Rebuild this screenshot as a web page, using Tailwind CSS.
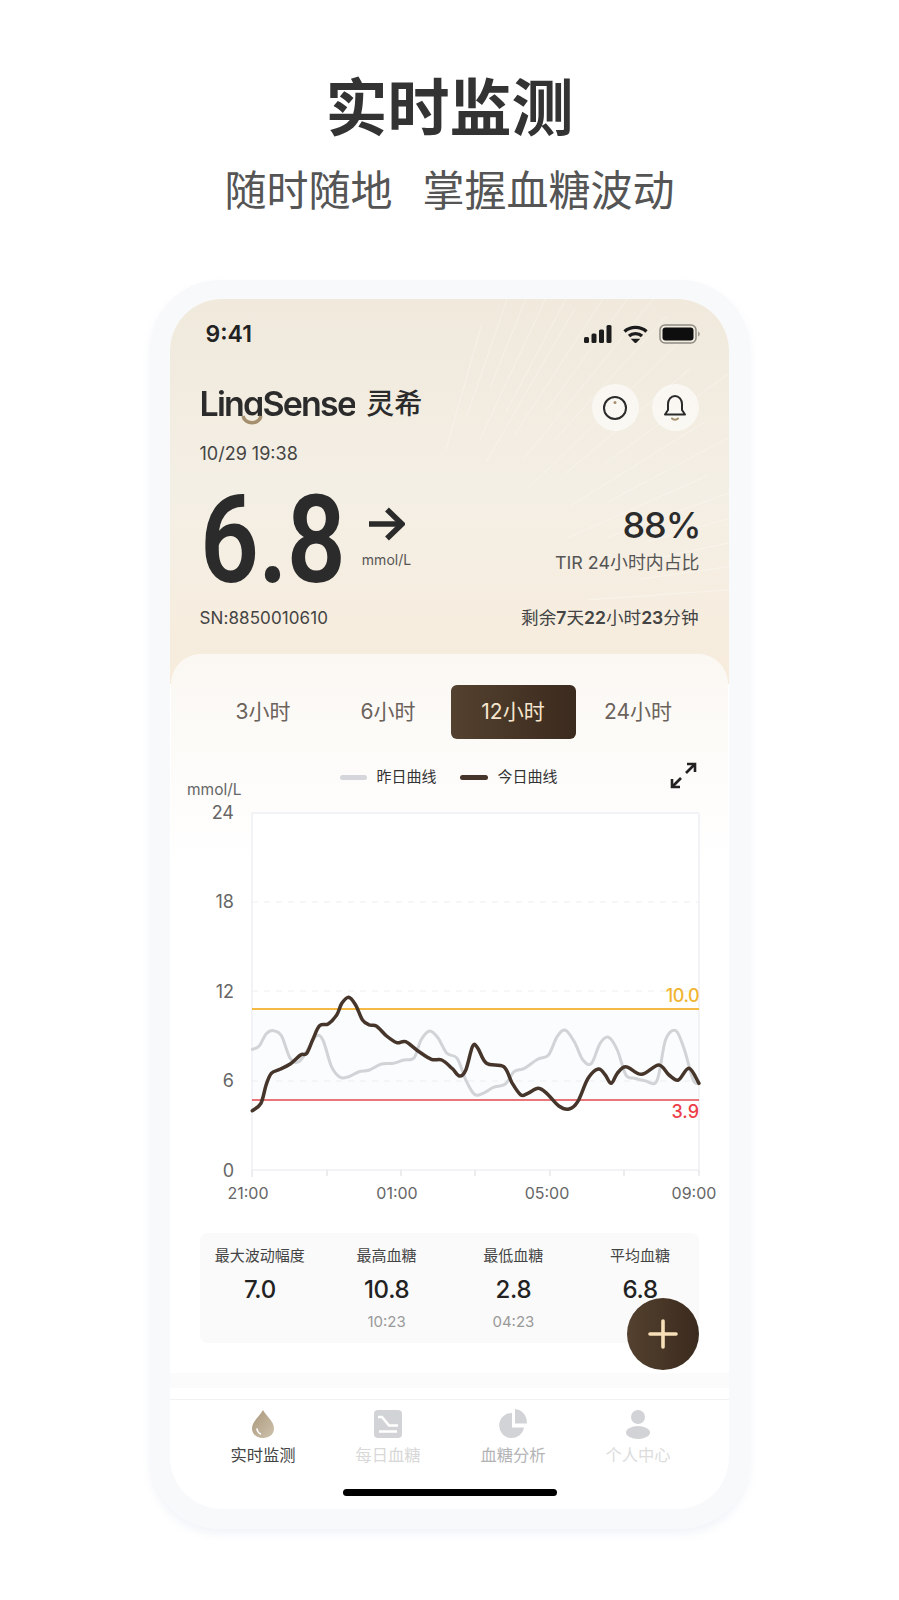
<!DOCTYPE html>
<html lang="zh-CN">
<head>
  <meta charset="UTF-8" />
  <meta name="viewport" content="width=device-width, initial-scale=1.0"/>
  <title>实时监测 | LingSense</title>
  <script src="https://cdn.jsdelivr.net/npm/@tailwindcss/browser@4"></script>
</head>
<body class="bg-white text-[#333] font-['Inter','Noto_Sans_CJK_SC',sans-serif]">
<div class="w-[899px] h-[1600px] overflow-hidden">

  <!-- Heading -->
  <h1 class="mt-[79px] h-[60px] leading-[60px] text-center text-[62px] font-bold text-[#333]">实时监测</h1>
  <p class="mt-[27px] h-[50px] leading-[50px] text-center text-[42px] text-[#555] flex justify-center gap-[30px]"><span>随时随地</span><span>掌握血糖波动</span></p>

  <!-- Phone -->
  <div class="mt-[64px] mx-auto w-[600px] h-[1249px] rounded-[70px] bg-[#f8f9fb] px-[20px] pt-[19px] shadow-[0_5px_8px_rgba(225,230,240,0.45)]">
    <div class="relative w-[559px] h-[1210px] rounded-[52px] bg-white overflow-hidden">

      <!-- Header -->
      <div class="relative h-[385px] bg-gradient-to-b from-[#f0e9dc] via-[#f4efe5] to-[#f7ecdc]">
        <svg id="rays" class="absolute inset-0" width="559" height="385"></svg>

        <!-- Status bar -->
        <div class="relative flex items-center justify-between h-[30px] top-[20px] pl-[36px] pr-[29px]">
          <span class="text-[23px] font-semibold text-[#222]">9:41</span>
          <div class="flex items-center gap-[11px]">
            <svg width="28" height="18" viewBox="0 0 28 18" fill="#1c1c1c"><rect x="0" y="12" width="5" height="6" rx="1.500"/><rect x="7.500" y="8.500" width="5" height="9.500" rx="1.500"/><rect x="15" y="4.500" width="5" height="13.500" rx="1.500"/><rect x="22.500" y="0" width="5" height="18" rx="1.500"/></svg>
            <svg width="25" height="18" viewBox="0 0 25 18" fill="none" stroke="#1c1c1c" stroke-width="3.400"><path d="M1.500 6.500C7.500 1 17.500 1 23.500 6.500"/><path d="M6 11C9.500 7.800 15.500 7.800 19 11"/><path d="M9.500 14.500L12.500 17.500L15.500 14.500Z" fill="#1c1c1c" stroke-width="1.500"/></svg>
            <svg width="41" height="20" viewBox="0 0 41 20" fill="none"><rect x="1" y="1" width="36" height="18" rx="5" stroke="#8f8c84" stroke-width="1.500"/><rect x="3.500" y="3.500" width="31" height="13" rx="3" fill="#0e0e0e"/><path d="M39 7.500c1.200.4 1.800 1.300 1.800 2.500s-.6 2.100-1.800 2.500Z" fill="#a09d94"/></svg>
          </div>
        </div>

        <!-- Logo and round buttons -->
        <div class="relative flex items-center justify-between mt-[35px] top-[20px] pl-[30px] pr-[30px] h-[47px]">
          <div class="relative flex items-center h-[40px] -top-[4px]">
            <span class="block text-[34px] leading-[40px] font-semibold tracking-[-1.800px] text-transparent bg-clip-text bg-gradient-to-b from-[#2b2b2b] from-[81%] to-transparent to-[81%]">LingSense</span>
            <span class="ml-[11px] text-[28px] font-medium text-[#2b2b2b] leading-[28px]">灵希</span>
            <svg class="absolute left-[41px] top-[30px]" width="22" height="12" viewBox="0 0 22 12" fill="none"><path d="M2 2C4 11 18 11 20 2" stroke="#a58f6f" stroke-width="3.500"/></svg>
          </div>
          <div class="flex gap-[13px]">
            <div class="w-[47px] h-[47px] rounded-full bg-white/60 flex items-center justify-center">
              <svg width="26" height="26" viewBox="0 0 26 26" fill="none"><circle cx="13" cy="13" r="11" stroke="#2b2b2b" stroke-width="2"/><circle cx="13" cy="7.500" r="1.500" fill="#a58f6f"/></svg>
            </div>
            <div class="w-[47px] h-[47px] rounded-full bg-white/60 flex items-center justify-center">
              <svg width="26" height="30" viewBox="0 0 26 30" fill="none"><path d="M3 21.500h20l-3-4.500V11C20 6.500 17 3 13 3S6 6.500 6 11v6Z" stroke="#2b2b2b" stroke-width="2" stroke-linejoin="round"/><path d="M10 25.500c1.500 1.500 4.500 1.500 6 0" stroke="#a58f6f" stroke-width="2" stroke-linecap="round"/></svg>
            </div>
          </div>
        </div>

        <!-- Time -->
        <div class="relative top-[20px] mt-[11px] pl-[30px] h-[24px] leading-[24px] text-[18px] text-[#444]">10/29 19:38</div>

        <!-- Reading -->
        <div class="relative top-[20px] mt-[6px] pl-[30px] pr-[30px] h-[130px] flex justify-between">
          <div class="flex">
            <span class="block relative top-[18px] w-[155px] h-[100px] origin-left scale-x-[0.84] text-[123px] leading-[100px] font-semibold font-['Roboto'] text-[#2b2b2b] tracking-[-1px]">6.8</span>
            <div class="ml-[7px] pt-[35px] flex flex-col items-center w-[50px]">
              <svg width="37" height="34" viewBox="0 0 37 34" fill="none" stroke="#2b2b2b" stroke-width="5.500"><path d="M1 17H33"/><path d="M19 2.500L34 17L19 31.500"/></svg>
              <span class="mt-[10px] text-[14px] text-[#555] leading-[18px]">mmol/L</span>
            </div>
          </div>
          <div class="flex flex-col items-end pt-[30px] -mr-[2px]">
            <span class="text-[36px] leading-[46px] font-medium tracking-[-1px] text-[#2b2b2b]">88%</span>
            <span class="mt-[3px] mr-[1px] text-[17.900px] leading-[24px] text-[#555]">TIR 24小时内占比</span>
          </div>
        </div>

        <!-- Sensor -->
        <div class="relative top-[20px] mt-[4px] pl-[30px] pr-[30px] h-[24px] leading-[24px] flex justify-between text-[17.600px] text-[#444]">
          <span class="text-[17px] tracking-[0.1px]">SN:8850010610</span>
          <span>剩余<b class="font-semibold">7</b>天<b class="font-semibold">22</b>小时<b class="font-semibold">23</b>分钟</span>
        </div>
      </div>

      <!-- Card -->
      <div class="relative -mt-[30px] h-[719px] rounded-t-[30px] bg-gradient-to-b from-[#fbf8f3] to-white to-[30%] mx-[1px]">
        <!-- Range tabs -->
        <div class="absolute left-[30px] top-[31px] flex w-[500px] h-[54px] items-center text-[21px] text-[#6b625b]">
          <div class="w-[125px] text-center">3小时</div>
          <div class="w-[125px] text-center">6小时</div>
          <div class="w-[125px] h-[54px] leading-[54px] text-center rounded-[6px] bg-gradient-to-r from-[#54412f] to-[#3b2b1e] text-[#f6e6cf]">12小时</div>
          <div class="w-[125px] text-center">24小时</div>
        </div>

        <!-- Legend -->
        <div class="absolute left-[169px] top-[112px] h-[22px] flex items-center text-[15px] text-[#333]">
          <span class="w-[27px] h-[5px] rounded-full bg-[#d5d6dc]"></span>
          <span class="ml-[10px]">昨日曲线</span>
          <span class="ml-[23px] w-[28px] h-[5px] rounded-full bg-[#45352a]"></span>
          <span class="ml-[10px]">今日曲线</span>
        </div>
        <svg class="absolute left-[499px] top-[108px]" width="27" height="27" viewBox="0 0 27 27" fill="none" stroke="#222" stroke-width="2.600"><path d="M16 11L25 2"/><path d="M17 2H25V10"/><path d="M11 16L2 25"/><path d="M2 17V25H10"/></svg>

        <!-- Chart -->
        <svg id="chart" class="absolute left-0 top-0" width="557" height="560" viewBox="171 654 557 560">
          <text x="187" y="795" font-size="15.500" fill="#666">mmol/L</text>
          <rect x="252" y="813" width="447" height="357" fill="#fff"/>
          <rect x="252" y="1009" width="447" height="91" fill="#fbfcfe"/>
          <path d="M252 813H699M699 813V1170M252 813V1170M252 1170H699" stroke="#eef0f3" stroke-width="1.500" fill="none"/>
          <path d="M252 902H699M252 991H699M252 1081H699" stroke="#eceef1" stroke-width="1" stroke-dasharray="6 6" fill="none"/>
          <path d="M252 1170v7M327 1170v6M401 1170v6M475 1170v6M550 1170v6M624 1170v6M699 1170v6" stroke="#e6e7ea" stroke-width="1.500"/>
          <g font-size="18" fill="#666" text-anchor="end">
            <text x="234" y="819">24</text>
            <text x="234" y="908">18</text>
            <text x="234" y="998">12</text>
            <text x="234" y="1087">6</text>
            <text x="234" y="1177">0</text>
          </g>
          <g font-size="16" fill="#666" text-anchor="middle">
            <text x="248" y="1199">21:00</text>
            <text x="397" y="1199">01:00</text>
            <text x="547" y="1199">05:00</text>
            <text x="694" y="1199">09:00</text>
          </g>
          <path id="yesterday" fill="none" stroke="#d2d3d6" stroke-width="3" stroke-linecap="round"/>
          <line x1="252" y1="1009" x2="699" y2="1009" stroke="#f5b945" stroke-width="1.800"/>
          <line x1="252" y1="1100" x2="699" y2="1100" stroke="#e5484d" stroke-width="1.500"/>
          <path id="today" fill="none" stroke="#45352a" stroke-width="3.500" stroke-linecap="round" stroke-linejoin="round"/>
          <text x="699" y="1002" font-size="18" font-weight="500" letter-spacing="-0.500" fill="#f1b431" text-anchor="end">10.0</text>
          <text x="699" y="1118" font-size="18" font-weight="500" fill="#ec3f49" text-anchor="end">3.9</text>
        </svg>

        <!-- Stats -->
        <div class="absolute left-[29px] top-[579px] w-[499px] h-[110px] rounded-[8px] bg-[#fafafa] grid grid-cols-4 pt-[11px] text-center">
          <div class="flex flex-col items-center -ml-[4px]">
            <span class="text-[15px] leading-[24px] text-[#444]">最大波动幅度</span>
            <span class="mt-[6px] text-[24px] leading-[32px] font-medium tracking-[-0.300px] text-[#222]">7.0</span>
          </div>
          <div class="flex flex-col items-center">
            <span class="text-[15px] leading-[24px] text-[#444]">最高血糖</span>
            <span class="mt-[6px] text-[24px] leading-[32px] font-medium tracking-[-0.300px] text-[#222]">10.8</span>
            <span class="mt-[6px] text-[15px] leading-[20px] text-[#999]">10:23</span>
          </div>
          <div class="flex flex-col items-center ml-[4px]">
            <span class="text-[15px] leading-[24px] text-[#444]">最低血糖</span>
            <span class="mt-[6px] text-[24px] leading-[32px] font-medium tracking-[-0.300px] text-[#222]">2.8</span>
            <span class="mt-[6px] text-[15px] leading-[20px] text-[#999]">04:23</span>
          </div>
          <div class="flex flex-col items-center ml-[8px]">
            <span class="text-[15px] leading-[24px] text-[#444]">平均血糖</span>
            <span class="mt-[6px] text-[24px] leading-[32px] font-medium tracking-[-0.300px] text-[#222]">6.8</span>
          </div>
        </div>

        <!-- Add button -->
        <div class="absolute left-[456px] top-[644px] w-[72px] h-[72px] rounded-full bg-gradient-to-r from-[#54412f] to-[#3b2b1e] flex items-center justify-center">
          <svg width="32" height="32" viewBox="0 0 32 32" fill="none" stroke="#f7e0b8" stroke-width="3.600" stroke-linecap="round"><path d="M16 3V29"/><path d="M3 16H29"/></svg>
        </div>
      </div>

      <!-- Divider band -->
      <div class="h-[15px] bg-[#fbfbfb]"></div>

      <!-- Tab bar -->
      <div class="mt-[11px] border-t border-[#f2f2f3] h-[108px] relative">
        <div class="grid grid-cols-4 w-[500px] ml-[31px] text-[16.300px] text-center">
          <div class="flex flex-col items-center pt-[9px] text-[#444]">
            <svg width="24" height="30" viewBox="0 0 24 30"><defs><linearGradient id="drop" x1="0" y1="0" x2="1" y2="1"><stop offset="0" stop-color="#a8967a"/><stop offset="1" stop-color="#cfc3ad"/></linearGradient></defs><path d="M12 1C15 7 23 12 23 19.500C23 25.500 18 29 12 29S1 25.500 1 19.500C1 12 9 7 12 1Z" fill="url(#drop)"/><path d="M6 20c.3 2.500 1.500 4 3.500 5" stroke="#fff" stroke-width="1.600" fill="none" stroke-linecap="round"/></svg>
            <span class="mt-[4px] leading-[24px]">实时监测</span>
          </div>
          <div class="flex flex-col items-center pt-[9px] text-[#d8d8d8]">
            <svg width="28" height="30" viewBox="0 0 28 28"><rect width="28" height="28" rx="4" fill="#d2d3d6"/><path d="M4 7h4l7 8.500h9" stroke="#fff" stroke-width="2.500" fill="none"/><path d="M5 21.500H23" stroke="#fff" stroke-width="2.500"/></svg>
            <span class="mt-[4px] leading-[24px]">每日血糖</span>
          </div>
          <div class="flex flex-col items-center pt-[8px] text-[#b4b4b6]">
            <svg width="30" height="31" viewBox="0 0 30 31" fill="#d2d3d6"><path d="M14 5A12.500 12.500 0 1 0 26 19.500H14Z"/><path d="M17 1C23.500 1.500 29 7 29 15.500H17Z"/></svg>
            <span class="mt-[4px] leading-[24px]">血糖分析</span>
          </div>
          <div class="flex flex-col items-center pt-[9px] text-[#dcdcdc]">
            <svg width="24" height="30" viewBox="0 0 24 30" fill="#d2d3d6"><circle cx="12" cy="8" r="7"/><ellipse cx="12" cy="23.500" rx="12" ry="6.500"/></svg>
            <span class="mt-[4px] leading-[24px]">个人中心</span>
          </div>
        </div>
        <div class="absolute left-[173px] top-[89px] w-[214px] h-[7px] rounded-full bg-black"></div>
      </div>

    </div>
  </div>
</div>

<script>
  // curve samples read off the chart, in a 2.904 x 3 scaled crop at (180,960)
  const TODAY = [[210,452],[235,430],[250,375],[265,340],[290,328],[320,312],[350,285],[368,280],[385,240],[405,197],[430,192],[455,165],[470,130],[490,112],[510,135],[530,180],[550,195],[570,198],[600,228],[630,248],[655,245],[690,272],[730,298],[760,300],[790,325],[812,348],[830,330],[850,258],[865,265],[890,310],[940,320],[965,370],[990,405],[1010,400],[1040,385],[1065,400],[1100,438],[1130,447],[1155,425],[1185,355],[1215,327],[1235,345],[1252,370],[1270,340],[1295,320],[1340,343],[1390,315],[1420,345],[1447,360],[1478,325],[1507,370]];
  const YESTERDAY = [[210,268],[230,258],[250,222],[272,212],[295,228],[320,295],[345,305],[370,270],[395,228],[415,240],[440,320],[465,352],[490,350],[520,335],[550,330],[585,312],[620,310],[650,300],[680,293],[700,240],[725,213],[750,235],[775,280],[805,295],[830,360],[855,403],[880,400],[910,382],[945,372],[970,335],[1000,325],[1040,297],[1070,285],[1095,230],[1118,210],[1145,245],[1170,300],[1195,310],[1220,250],[1245,232],[1270,270],[1295,345],[1320,355],[1350,362],[1385,362],[1410,240],[1440,212],[1465,270],[1490,360],[1507,370]];

  function smoothPath(samples) {
    const pts = samples.map(([x, y]) => [180 + x / 2.904, 960 + y / 3]);
    let d = `M${pts[0][0].toFixed(1)} ${pts[0][1].toFixed(1)}`;
    for (let i = 0; i < pts.length - 1; i++) {
      const p0 = pts[i - 1] || pts[i], p1 = pts[i], p2 = pts[i + 1], p3 = pts[i + 2] || p2;
      const c1 = [p1[0] + (p2[0] - p0[0]) / 6, p1[1] + (p2[1] - p0[1]) / 6];
      const c2 = [p2[0] - (p3[0] - p1[0]) / 6, p2[1] - (p3[1] - p1[1]) / 6];
      d += `C${c1[0].toFixed(1)} ${c1[1].toFixed(1)} ${c2[0].toFixed(1)} ${c2[1].toFixed(1)} ${p2[0].toFixed(1)} ${p2[1].toFixed(1)}`;
    }
    return d;
  }
  document.getElementById("today").setAttribute("d", smoothPath(TODAY));
  document.getElementById("yesterday").setAttribute("d", smoothPath(YESTERDAY));

  // thin light rays fanning out in the header
  const cx = 229, cy = 314;
  const angles = [-74,-71,-68,-65,-62,-60,-57,-54,-51,-48,-44,-40,-36,-32,-28,-24,-20,-16,-12,-8,-4];
  let rays = "";
  angles.forEach((deg, i) => {
    const a = deg * Math.PI / 180;
    const r1 = 170 + (i * 37) % 90, r2 = r1 + 130 + (i * 53) % 110;
    rays += `<line x1="${cx + r1 * Math.cos(a)}" y1="${cy + r1 * Math.sin(a)}" x2="${cx + r2 * Math.cos(a)}" y2="${cy + r2 * Math.sin(a)}" stroke="#fff" stroke-opacity="0.35" stroke-width="1"/>`;
  });
  document.getElementById("rays").innerHTML = rays;
</script>
</body>
</html>
